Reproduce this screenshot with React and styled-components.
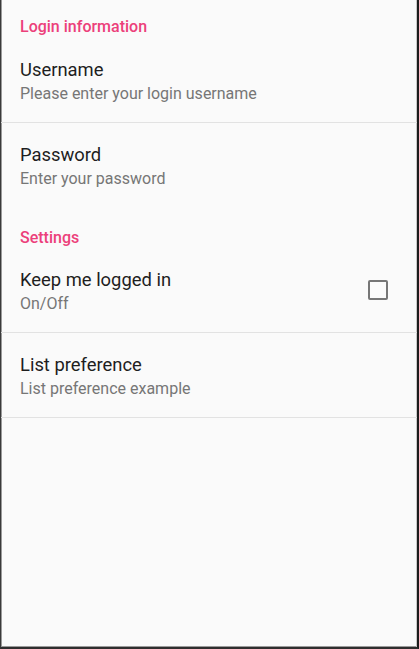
import React from "react";
import styled, { createGlobalStyle } from "styled-components";

const Global = createGlobalStyle`
  html, body { margin: 0; padding: 0; background: #fafafa; }
  body { font-family: Roboto, "Noto Sans", Arial, sans-serif; }
`;

const Frame = styled.div`
  box-sizing: border-box;
  width: 419px;
  height: 649px;
  background: #fafafa;
  border-left: 1px solid #3a3a3a;
  border-right: 2px solid #1c1c1c;
  border-bottom: 2px solid #2e2e2e;
  box-shadow: inset 1px 0 0 #9a9a9a, inset -1px 0 0 #c8c8c8, inset 0 -1px 0 #9a9a9a;
  display: flex;
  flex-direction: column;
`;

const Header = styled.div`
  padding: ${(p) => p.$top}px 19px 0;
  height: 20px;
  line-height: 20px;
  font-size: 16px;
  font-weight: 500;
  color: #ec407a;
`;

const Row = styled.div`
  display: flex;
  align-items: center;
  padding: 21px 29px 17px 19px;
  height: 46px;
  border-bottom: ${(p) => (p.$divider ? "1px solid #e2e2e2" : "none")};
  margin-top: ${(p) => p.$mt || 0}px;
`;

const Texts = styled.div`
  flex: 1;
  display: flex;
  flex-direction: column;
`;

const Title = styled.div`
  font-size: 18.4px;
  line-height: 22px;
  color: #1e1e1e;
`;

const Summary = styled.div`
  margin-top: 2px;
  font-size: 16px;
  line-height: 22px;
  color: #767676;
`;

const Check = styled.div`
  box-sizing: border-box;
  width: 20px;
  height: 20px;
  margin-bottom: 4px;
  border: 2.5px solid #767676;
  border-radius: 2px;
`;

export default function App() {
  return (
    <>
      <Global />
      <Frame>
        <Header $top={17}>Login information</Header>
        <Row $divider $mt={1}>
          <Texts>
            <Title>Username</Title>
            <Summary>Please enter your login username</Summary>
          </Texts>
        </Row>
        <Row>
          <Texts>
            <Title>Password</Title>
            <Summary>Enter your password</Summary>
          </Texts>
        </Row>
        <Header $top={21}>Settings</Header>
        <Row $divider>
          <Texts>
            <Title>Keep me logged in</Title>
            <Summary>On/Off</Summary>
          </Texts>
          <Check />
        </Row>
        <Row $divider>
          <Texts>
            <Title>List preference</Title>
            <Summary>List preference example</Summary>
          </Texts>
        </Row>
      </Frame>
    </>
  );
}
